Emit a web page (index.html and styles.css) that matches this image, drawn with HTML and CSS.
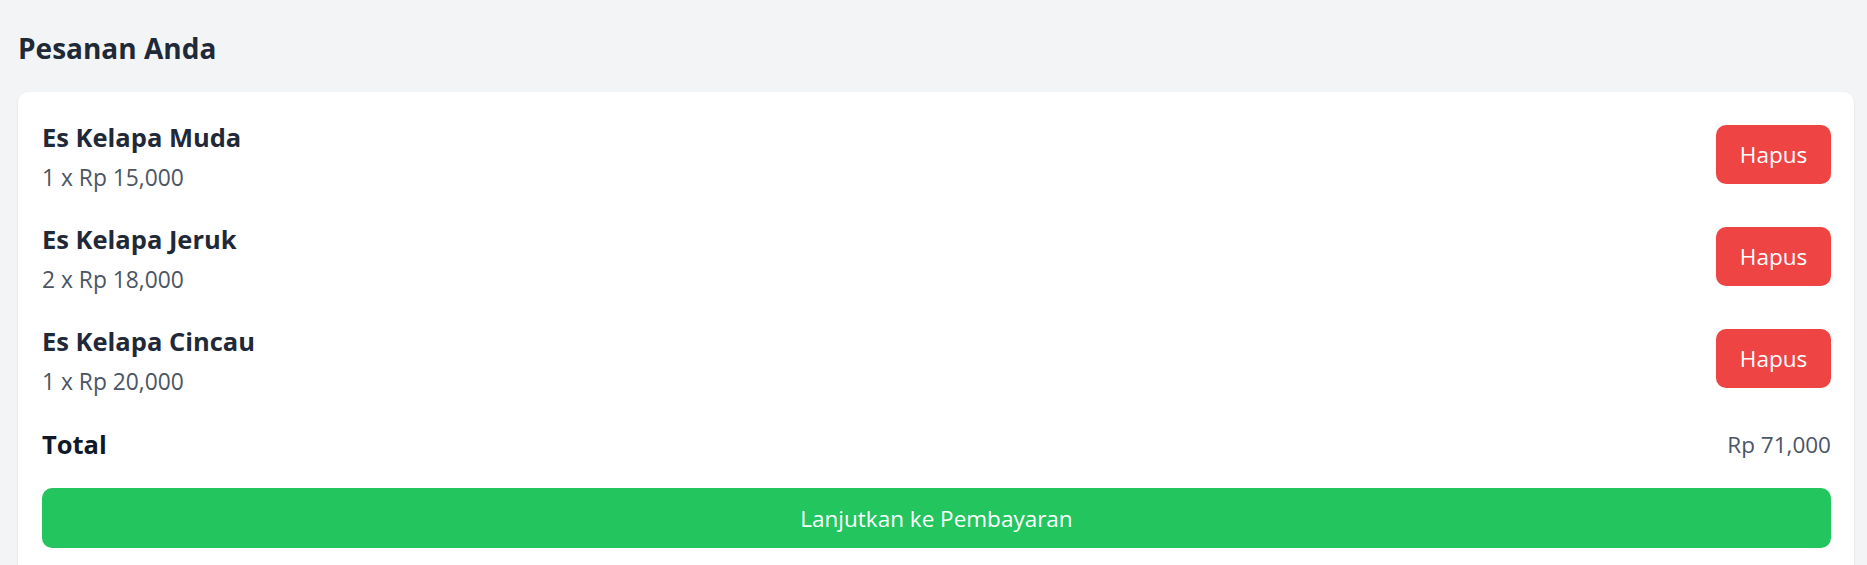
FILE: index.html
```html
<!DOCTYPE html>
<html lang="id">
<head>
<meta charset="utf-8">
<title>Pesanan Anda</title>
<link rel="stylesheet" href="styles.css">
</head>
<body>
<main class="page">
  <h2 class="title">Pesanan Anda</h2>
  <section class="card">
    <ul class="items">
      <li class="item">
        <div class="info">
          <div class="name">Es Kelapa Muda</div>
          <div class="qty">1 x Rp 15,000</div>
        </div>
        <button class="btn-delete">Hapus</button>
      </li>
      <li class="item">
        <div class="info">
          <div class="name">Es Kelapa Jeruk</div>
          <div class="qty">2 x Rp 18,000</div>
        </div>
        <button class="btn-delete">Hapus</button>
      </li>
      <li class="item">
        <div class="info">
          <div class="name">Es Kelapa Cincau</div>
          <div class="qty">1 x Rp 20,000</div>
        </div>
        <button class="btn-delete">Hapus</button>
      </li>
    </ul>
    <div class="total">
      <span class="total-label">Total</span>
      <span class="total-value">Rp 71,000</span>
    </div>
    <button class="btn-pay">Lanjutkan ke Pembayaran</button>
  </section>
</main>
</body>
</html>
```

FILE: styles.css
```css
* { box-sizing: border-box; }
html, body {
  margin: 0;
  background: #f3f4f6;
  font-family: "Open Sans", "Noto Sans", sans-serif;
}
.page {
  padding: 27px 13px 0 18px;
}
.title {
  margin: 0 0 23px 0;
  font-size: 28px;
  line-height: 42px;
  font-weight: 700;
  color: #1f2937;
}
.card {
  background: #ffffff;
  border-radius: 10px;
  box-shadow: 0 1px 3px rgba(0,0,0,0.08), 0 1px 2px rgba(0,0,0,0.04);
  padding: 20.5px 23px 30px 24px;
  min-height: 500px;
}
.items {
  list-style: none;
  margin: 0;
  padding: 0;
  display: flex;
  flex-direction: column;
  gap: 18px;
}
.item {
  display: flex;
  align-items: center;
  justify-content: space-between;
}
.info {
  padding-top: 4px;
}
.name {
  font-size: 25.5px;
  line-height: 40px;
  font-weight: 700;
  color: #1f2937;
}
.qty {
  margin-top: 2px;
  font-size: 22.8px;
  line-height: 38px;
  color: #4b5563;
}
.btn-delete {
  width: 115px;
  height: 59px;
  border: 0;
  border-radius: 10px;
  background: #ef4444;
  color: #ffffff;
  font-family: inherit;
  font-size: 22.5px;
  cursor: pointer;
}
.total {
  display: flex;
  justify-content: space-between;
  align-items: center;
  margin-top: 25px;
  height: 37px;
  line-height: 37px;
}
.total-label {
  font-size: 25.5px;
  font-weight: 700;
  color: #111827;
}
.total-value {
  font-size: 22.5px;
  color: #4b5563;
}
.btn-pay {
  display: block;
  width: 100%;
  height: 60px;
  margin-top: 25.5px;
  border: 0;
  border-radius: 10px;
  background: #22c55e;
  color: #ffffff;
  font-family: inherit;
  font-size: 22.5px;
  cursor: pointer;
}
```
